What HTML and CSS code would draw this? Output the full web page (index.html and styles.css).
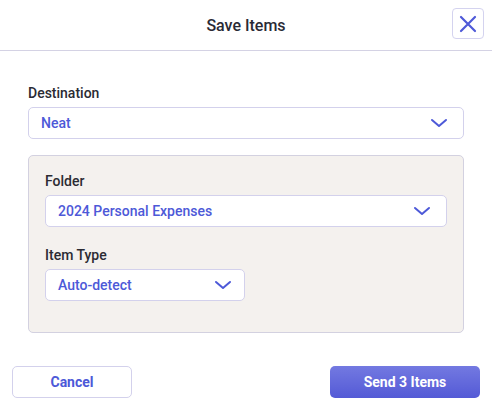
FILE: index.html
```html
<!DOCTYPE html>
<html>
<head>
    <title>Save Items</title>
    <link rel="stylesheet" href="styles.css">
</head>
<body>
    <div class="dialog">
        <div class="header">
            <h1>Save Items</h1>
            <button class="close" aria-label="Close">
                <svg width="18" height="18" viewBox="0 0 18 18"><path d="M2 2 L16 16 M16 2 L2 16" stroke="currentColor" stroke-width="2.2" stroke-linecap="round" fill="none"/></svg>
            </button>
        </div>

        <div class="body">
            <div class="field">
                <label>Destination</label>
                <div class="select">
                    <span>Neat</span>
                    <svg class="chev" width="18" height="10" viewBox="0 0 18 10"><path d="M2 2 L9 8 L16 2" stroke="currentColor" stroke-width="2" stroke-linecap="round" stroke-linejoin="round" fill="none"/></svg>
                </div>
            </div>

            <div class="panel">
                <div class="field">
                    <label>Folder</label>
                    <div class="select">
                        <span>2024 Personal Expenses</span>
                        <svg class="chev" width="18" height="10" viewBox="0 0 18 10"><path d="M2 2 L9 8 L16 2" stroke="currentColor" stroke-width="2" stroke-linecap="round" stroke-linejoin="round" fill="none"/></svg>
                    </div>
                </div>
                <div class="field">
                    <label>Item Type</label>
                    <div class="select small">
                        <span>Auto-detect</span>
                        <svg class="chev" width="18" height="10" viewBox="0 0 18 10"><path d="M2 2 L9 8 L16 2" stroke="currentColor" stroke-width="2" stroke-linecap="round" stroke-linejoin="round" fill="none"/></svg>
                    </div>
                </div>
            </div>
        </div>

        <div class="footer">
            <button class="btn cancel">Cancel</button>
            <button class="btn send">Send 3 Items</button>
        </div>
    </div>
</body>
</html>
```

FILE: styles.css
```css
body {
    margin: 0;
    font-family: Roboto, "Liberation Sans", sans-serif;
    background-color: white;
    color: #2b2b33;
}
.dialog {
    width: 492px;
    height: 411px;
    display: flex;
    flex-direction: column;
}
.header {
    height: 50px;
    border-bottom: 1px solid #d4d2e4;
    display: flex;
    align-items: center;
    justify-content: center;
    position: relative;
}
h1 {
    margin: 0;
    font-size: 16px;
    font-weight: 500;
    color: #2a2a35;
}
.close {
    position: absolute;
    right: 8px;
    top: 8px;
    width: 32px;
    height: 31px;
    border: 1px solid #d4d3ef;
    border-radius: 4px;
    background: white;
    color: #4f5ad8;
    display: flex;
    align-items: center;
    justify-content: center;
    padding: 0;
}
.body {
    padding: 34px 28px 0 28px;
}
.field label {
    display: block;
    font-size: 14px;
    font-weight: 500;
    color: #2b2b33;
    line-height: 16px;
    margin-bottom: 6px;
}
.select {
    height: 30px;
    border: 1px solid #d3d1ec;
    border-radius: 5px;
    background: white;
    display: flex;
    align-items: center;
    justify-content: space-between;
    padding: 0 15px 0 12px;
    color: #4d59d8;
    font-size: 14px;
    font-weight: 500;
}
.select.small {
    width: 174px;
    padding: 0 12px 0 12px;
}
.chev {
    display: block;
}
.panel {
    margin-top: 16px;
    background-color: #f4f1ee;
    border: 1px solid #d3d1e0;
    border-radius: 5px;
    padding: 17px 16px 31px 16px;
    display: flex;
    flex-direction: column;
    gap: 20px;
}
.footer {
    display: flex;
    justify-content: space-between;
    padding: 33px 12px 0 12px;
}
.btn {
    height: 32px;
    border-radius: 5px;
    font-family: Roboto, "Liberation Sans", sans-serif;
    font-size: 14px;
    font-weight: 700;
    cursor: pointer;
}
.cancel {
    width: 120px;
    background: white;
    border: 1px solid #d3d1ec;
    color: #4d59d8;
}
.send {
    width: 150px;
    border: none;
    color: white;
    background: linear-gradient(#7379e1, #545ad6);
}
```
